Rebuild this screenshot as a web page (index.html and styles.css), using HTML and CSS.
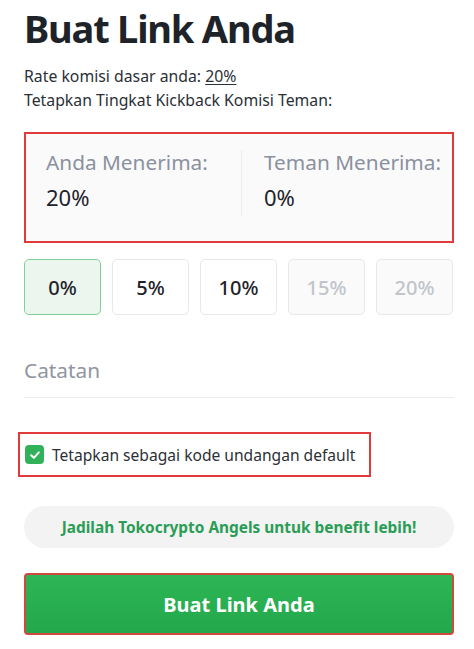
FILE: index.html
```html
<!DOCTYPE html>
<html lang="id">
<head>
<meta charset="utf-8">
<link rel="stylesheet" href="styles.css">
</head>
<body>
<main class="page">
  <h1 class="title">Buat Link Anda</h1>
  <p class="info">Rate komisi dasar anda: <u>20%</u><br>Tetapkan Tingkat Kickback Komisi Teman:</p>
  <section class="split">
    <div class="split-col">
      <div class="split-label">Anda Menerima:</div>
      <div class="split-value">20%</div>
    </div>
    <div class="split-div"></div>
    <div class="split-col second">
      <div class="split-label">Teman Menerima:</div>
      <div class="split-value">0%</div>
    </div>
  </section>
  <div class="rates">
    <button class="rate active">0%</button>
    <button class="rate">5%</button>
    <button class="rate">10%</button>
    <button class="rate disabled">15%</button>
    <button class="rate disabled">20%</button>
  </div>
  <div class="note">Catatan</div>
  <label class="check">
    <span class="box"><svg width="12" height="12" viewBox="0 0 12 12"><path d="M2.2 6.2 L4.9 8.8 L9.8 3.4" fill="none" stroke="#fff" stroke-width="2" stroke-linecap="round" stroke-linejoin="round"/></svg></span>
    <span class="check-text">Tetapkan sebagai kode undangan default</span>
  </label>
  <div class="promo">Jadilah Tokocrypto Angels untuk benefit lebih!</div>
  <button class="submit">Buat Link Anda</button>
</main>
</body>
</html>
```
FILE: styles.css
```css
* { box-sizing: border-box; }
html, body { margin: 0; background: #fff; }
body { font-family: "Noto Sans", "Open Sans", sans-serif; color: #1e2329; }
.page { width: 474px; padding: 0 20px 0 24px; }
.title { margin: 0; padding-top: 2px; font-size: 38px; line-height: 52px; font-weight: 700; color: #1e2329; letter-spacing: -1.2px; }
.info { margin: 10px 0 0; font-size: 15.8px; line-height: 24px; color: #2b2f36; }
.info u { text-underline-offset: 2px; }
.split { margin-top: 20px; height: 111px; border: 2px solid #e03a3a; background: #fafafa; display: flex; padding: 15px 0 0 20px; }
.split-col { width: 195px; flex: none; white-space: nowrap; }
.split-col.second { padding-left: 22px; flex: 1; }
.split-div { width: 1px; flex: none; background: #ececec; height: 66px; margin-top: 1px; }
.split-label { font-size: 20.8px; line-height: 26px; color: #8a919e; }
.split-value { margin-top: 8px; font-size: 22px; line-height: 28px; color: #1e2329; }
.rates { margin-top: 16px; display: flex; gap: 11px; }
.rate { width: 77px; height: 56px; border: 1px solid #e6e8ea; border-radius: 5px; background: #fff; font-family: inherit; font-size: 20px; font-weight: 500; color: #1e2329; padding: 0; }
.rate.active { background: #ecf6ef; border-color: #7fd19a; }
.rate.disabled { background: #fafafa; color: #c0c4cc; }
.note { margin-top: 40px; padding-bottom: 12px; border-bottom: 1px solid #eaecef; font-size: 20.8px; line-height: 30px; color: #8f96a2; }
.check { margin: 34px 0 0 -6px; width: 353px; height: 45px; border: 2px solid #e03a3a; display: flex; align-items: center; gap: 8px; padding-left: 5px; }
.box { width: 19px; height: 19px; border-radius: 4px; background: #31b25a; display: flex; align-items: center; justify-content: center; }
.check-text { font-size: 15.6px; color: #2b2f36; }
.promo { margin-top: 29px; height: 42px; border-radius: 21px; background: #f3f3f3; display: flex; align-items: center; justify-content: center; font-size: 15.4px; font-weight: 700; color: #2a9d56; }
.submit { display: block; margin-top: 25px; width: 430px; height: 62px; border: 2px solid #d0493f; border-radius: 4px; background: linear-gradient(#2db655, #23a84c); color: #fff; font-family: inherit; font-size: 20px; font-weight: 700; }
```
